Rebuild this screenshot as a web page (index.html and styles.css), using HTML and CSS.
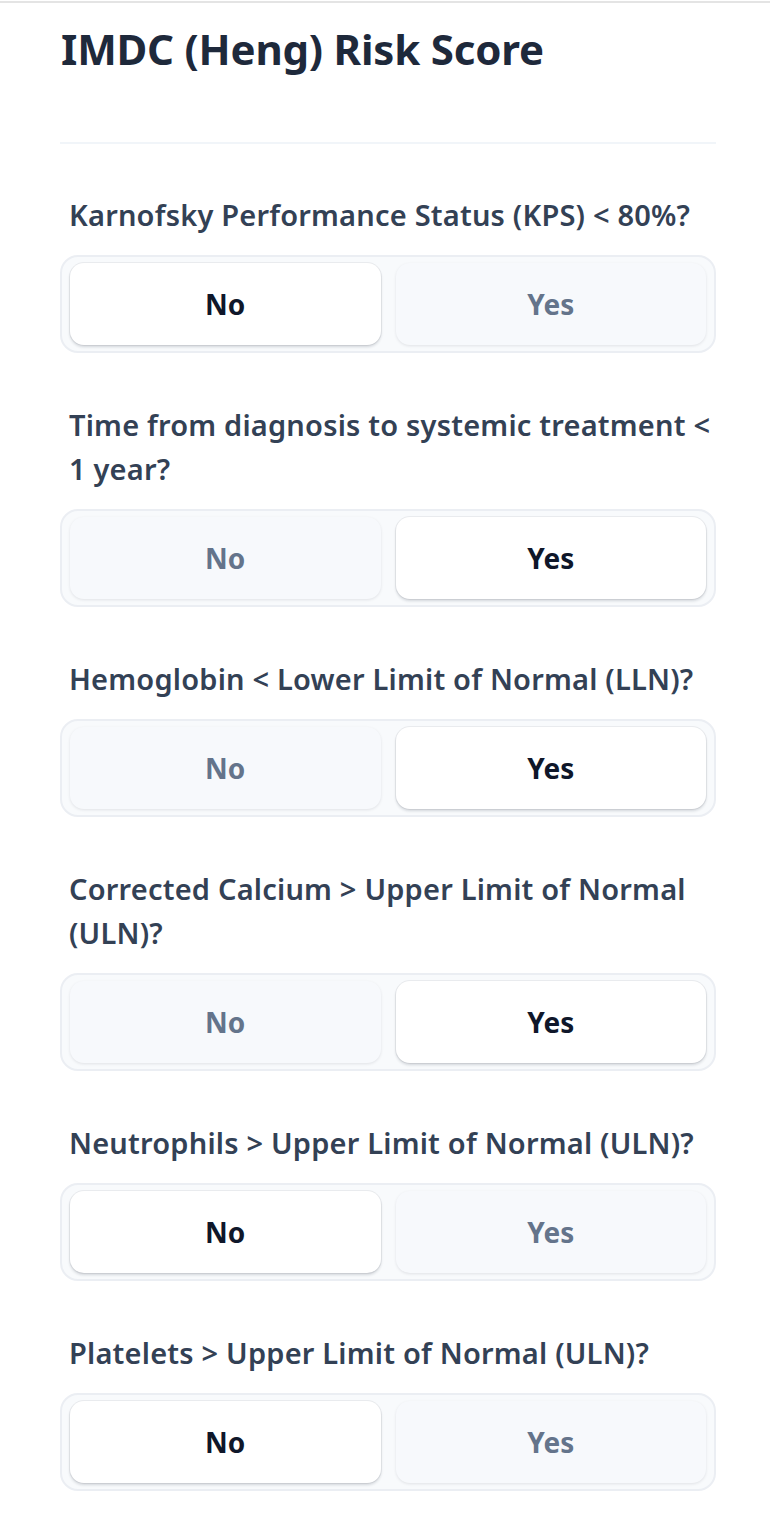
FILE: index.html
```html
<!DOCTYPE html>
<html lang="en">
<head>
    <meta charset="UTF-8">
    <meta name="viewport" content="width=device-width, initial-scale=1.0">
    <title>IMDC (Heng) Risk Score</title>
    <link rel="stylesheet" href="styles.css">
</head>
<body>
    <main class="calculator">
        <header class="calc-header">
            <h1>IMDC (Heng) Risk Score</h1>
        </header>

        <div class="question">
            <p class="question-label">Karnofsky Performance Status (KPS) &lt; 80%?</p>
            <div class="toggle">
                <button type="button" class="option selected">No</button>
                <button type="button" class="option">Yes</button>
            </div>
        </div>

        <div class="question">
            <p class="question-label">Time from diagnosis to systemic treatment &lt; 1 year?</p>
            <div class="toggle">
                <button type="button" class="option">No</button>
                <button type="button" class="option selected">Yes</button>
            </div>
        </div>

        <div class="question">
            <p class="question-label">Hemoglobin &lt; Lower Limit of Normal (LLN)?</p>
            <div class="toggle">
                <button type="button" class="option">No</button>
                <button type="button" class="option selected">Yes</button>
            </div>
        </div>

        <div class="question">
            <p class="question-label">Corrected Calcium &gt; Upper Limit of Normal (ULN)?</p>
            <div class="toggle">
                <button type="button" class="option">No</button>
                <button type="button" class="option selected">Yes</button>
            </div>
        </div>

        <div class="question">
            <p class="question-label">Neutrophils &gt; Upper Limit of Normal (ULN)?</p>
            <div class="toggle">
                <button type="button" class="option selected">No</button>
                <button type="button" class="option">Yes</button>
            </div>
        </div>

        <div class="question">
            <p class="question-label">Platelets &gt; Upper Limit of Normal (ULN)?</p>
            <div class="toggle">
                <button type="button" class="option selected">No</button>
                <button type="button" class="option">Yes</button>
            </div>
        </div>
    </main>
</body>
</html>
```

FILE: styles.css
```css
body {
    margin: 0;
    padding: 0;
    background-color: #ffffff;
    font-family: 'Noto Sans', 'Open Sans', sans-serif;
    color: #334155;
}

.calculator {
    margin-top: 1px;
    border-top: 2px solid #e4e4e4;
    padding: 0 54px 0 60px;
}

.calc-header {
    padding-top: 21px;
    padding-bottom: 68px;
    border-bottom: 2px solid #f1f5f9;
}

.calc-header h1 {
    margin: 0;
    padding-left: 1px;
    font-size: 42px;
    line-height: 50px;
    font-weight: 700;
    letter-spacing: -0.2px;
    color: #1e293b;
}

.question {
    margin-top: 49px;
}

.question + .question {
    margin-top: 50px;
}

.question-label {
    margin: 0 0 18px;
    padding: 0 0 0 9px;
    font-size: 29px;
    line-height: 44px;
    font-weight: 600;
    letter-spacing: 0.2px;
    color: #334155;
}

.toggle {
    display: grid;
    grid-template-columns: 1fr 1fr;
    gap: 15px;
    padding: 6px 8px;
    background-color: #f8fafc;
    border: 2px solid #ebeef3;
    border-radius: 18px;
}

.option {
    height: 82px;
    border: none;
    border-radius: 14px;
    background-color: #f7f9fc;
    box-shadow: 0 1px 3px rgba(15, 23, 42, 0.1);
    font-family: inherit;
    font-size: 28px;
    font-weight: 700;
    color: #64748b;
    cursor: pointer;
}

.option.selected {
    background-color: #ffffff;
    color: #0f172a;
    box-shadow: 0 0 0 1px rgba(15, 23, 42, 0.06), 0 2px 3px rgba(15, 23, 42, 0.16);
}
```
